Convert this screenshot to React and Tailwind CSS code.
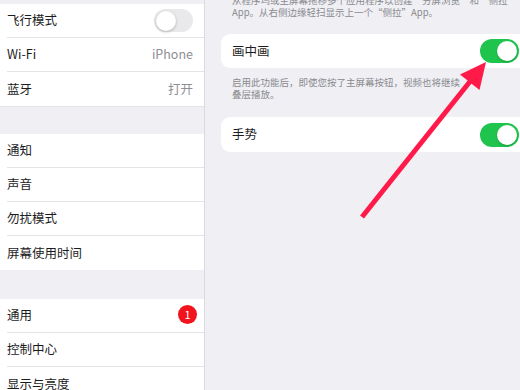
import React from 'react';

const FONT = { fontFamily: '"Noto Sans CJK SC", "Noto Sans", sans-serif' };

function Toggle({ on }) {
  if (on) {
    return (
      <div className="w-[39px] h-[24px] rounded-full bg-[#1fc44d] relative shrink-0">
        <div className="absolute right-[2px] top-[2px] w-[20px] h-[20px] rounded-full bg-white shadow-[0_1px_2px_rgba(0,0,0,0.2)]" />
      </div>
    );
  }
  return (
    <div className="w-[39px] h-[23px] rounded-full bg-[#e9e9eb] relative shrink-0">
      <div className="absolute left-[1.5px] top-[1.5px] w-[20px] h-[20px] rounded-full bg-white shadow-[0_1px_3px_rgba(0,0,0,0.25)]" />
    </div>
  );
}

function Row({ label, right, last }) {
  return (
    <div className="h-[34px] bg-white pl-[7px] flex">
      <div className={`flex-1 flex items-center justify-between pr-[11px] ${last ? '' : 'border-b border-[#e4e4e8]'}`}>
        <span className="text-[12.5px] text-[#1c1c1e]">{label}</span>
        {right}
      </div>
    </div>
  );
}

const Gray = ({ children }) => <span className="text-[12.5px] text-[#8e8e93]">{children}</span>;

export default function App() {
  return (
    <div className="w-[520px] h-[390px] flex overflow-hidden relative bg-[#efeff4]" style={FONT}>
      {/* sidebar */}
      <div className="w-[205px] shrink-0 border-r border-[#d9d9de] bg-[#efeff4] pt-[4px] flex flex-col">
        <div className="border-b border-[#e4e4e8]">
          <Row label="飞行模式" right={<Toggle />} />
          <Row label="Wi-Fi" right={<Gray>iPhone</Gray>} />
          <Row label="蓝牙" right={<Gray>打开</Gray>} last />
        </div>
        <div className="mt-[27px]">
          <Row label="通知" />
          <Row label="声音" />
          <Row label="勿扰模式" />
          <Row label="屏幕使用时间" last />
        </div>
        <div className="mt-[29px]">
          <Row
            label="通用"
            right={
              <div className="w-[19px] h-[19px] rounded-full bg-[#f2141c] text-white text-[11px] flex items-center justify-center -mr-[4px] -mt-[2px]">
                1
              </div>
            }
          />
          <Row label="控制中心" />
          <Row label="显示与亮度" last />
        </div>
      </div>

      {/* detail */}
      <div className="flex-1 overflow-hidden pl-[16px]">
        <div className="-mt-[6px] pl-[11px] text-[9.5px] leading-[12px] text-[#8a8a8e] whitespace-nowrap">
          <div>从程序坞或主屏幕拖移多个应用程序以创建“分屏浏览”和“侧拉”</div>
          <div>App。从右侧边缘轻扫显示上一个“侧拉”App。</div>
        </div>
        <div className="mt-[16px] h-[34px] bg-white rounded-[9px] -mr-[14px] pl-[11px] pr-[15px] flex items-center justify-between">
          <span className="text-[12.5px] text-[#1c1c1e]">画中画</span>
          <Toggle on />
        </div>
        <div className="mt-[8px] pl-[11px] text-[9.5px] leading-[12px] text-[#8a8a8e] whitespace-nowrap">
          <div>启用此功能后，即使您按了主屏幕按钮，视频也将继续</div>
          <div>叠层播放。</div>
        </div>
        <div className="mt-[17px] h-[35px] bg-white rounded-[9px] -mr-[14px] pl-[11px] pr-[15px] flex items-center justify-between">
          <span className="text-[12.5px] text-[#1c1c1e]">手势</span>
          <Toggle on />
        </div>
      </div>

      {/* annotation arrow */}
      <svg className="absolute inset-0 pointer-events-none" width="520" height="390" viewBox="0 0 520 390">
        <line x1="362" y1="217" x2="472" y2="79" stroke="#ff1a4a" strokeWidth="5" />
        <polygon points="486,62 479.5,90 460,74.5" fill="#ff1a4a" />
      </svg>
    </div>
  );
}
